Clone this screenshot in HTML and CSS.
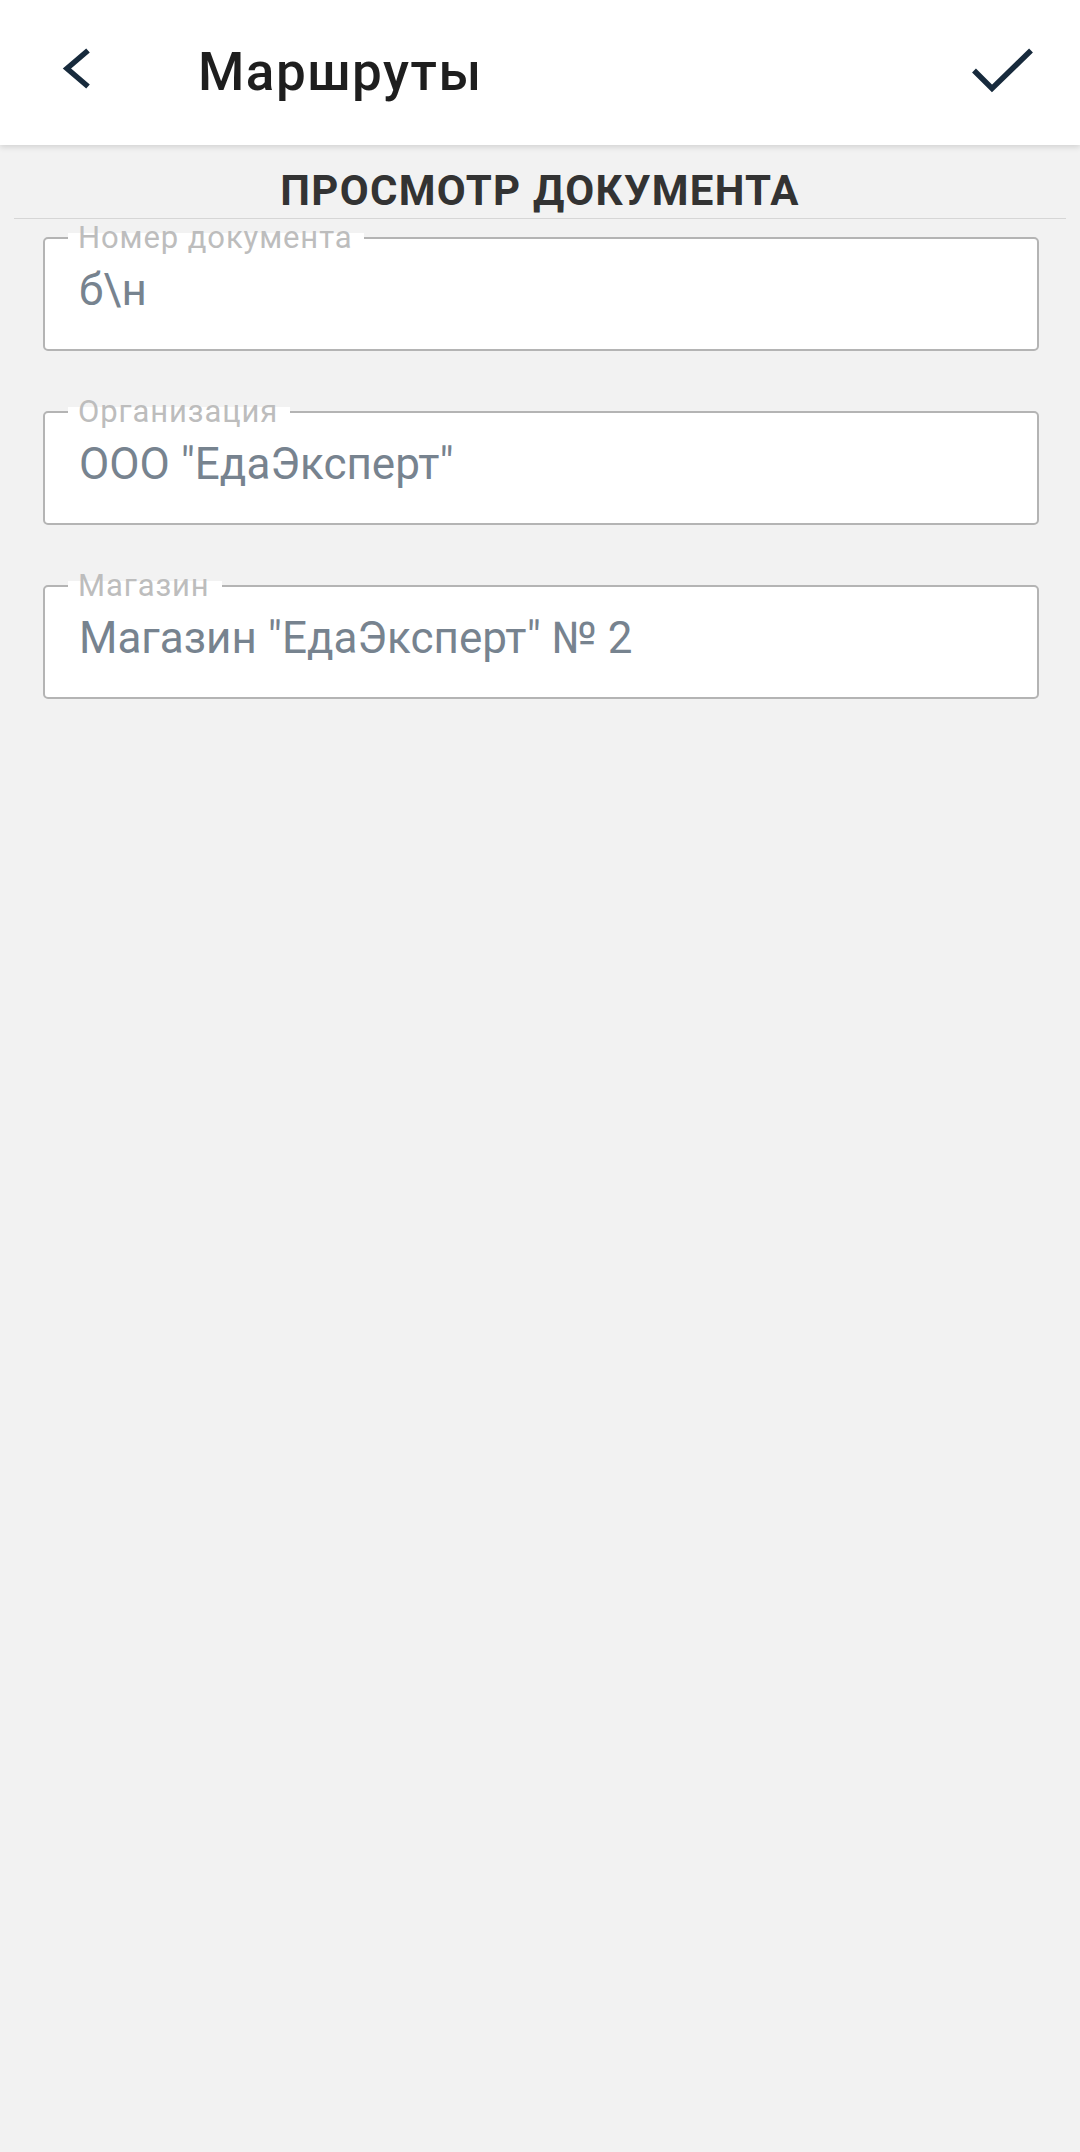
FILE: index.html
```html
<!DOCTYPE html>
<html lang="ru">
<head>
<meta charset="utf-8">
<title>Маршруты</title>
<link rel="stylesheet" href="styles.css">
</head>
<body>
<header class="appbar">
  <svg class="back" viewBox="0 0 60 60" width="60" height="60">
    <polyline points="41,7.5 20,25.5 41,43.5" fill="none" stroke="#172a3c" stroke-width="5.5" stroke-linejoin="miter"/>
  </svg>
  <h1 class="title">Маршруты</h1>
  <svg class="check" viewBox="0 0 70 60" width="70" height="60">
    <polyline points="4,27.5 22,45.5 61,7.5" fill="none" stroke="#172a3c" stroke-width="5.5" stroke-linejoin="miter"/>
  </svg>
</header>
<main class="content">
  <h2 class="section-title">ПРОСМОТР ДОКУМЕНТА</h2>
  <div class="divider"></div>
  <div class="fields">
    <div class="field">
      <span class="field-label">Номер документа</span>
      <div class="field-value">б\н</div>
    </div>
    <div class="field">
      <span class="field-label">Организация</span>
      <div class="field-value">ООО "ЕдаЭксперт"</div>
    </div>
    <div class="field">
      <span class="field-label">Магазин</span>
      <div class="field-value">Магазин "ЕдаЭксперт" № 2</div>
    </div>
  </div>
</main>
</body>
</html>
```
FILE: styles.css
```css
html, body {
  margin: 0;
  padding: 0;
}
body {
  background: #f2f2f2;
  font-family: Roboto, "Noto Sans", "Liberation Sans", sans-serif;
  min-height: 2152px;
}
.appbar {
  height: 145px;
  background: #ffffff;
  display: flex;
  align-items: center;
  box-shadow: 0 2px 6px rgba(0, 0, 0, 0.14);
  position: relative;
  z-index: 1;
}
.back {
  margin-left: 47px;
  flex: none;
}
.title {
  margin: 0 0 0 91px;
  font-size: 53px;
  font-weight: 500;
  letter-spacing: 1.5px;
  line-height: 61px;
  color: #1e1e1e;
  flex: 1;
}
.check {
  margin-right: 40px;
  flex: none;
}
.content {
  padding-top: 21px;
}
.section-title {
  margin: 0;
  text-align: center;
  font-size: 42px;
  font-weight: 700;
  letter-spacing: 1.3px;
  line-height: 49px;
  color: #333333;
}
.divider {
  height: 1px;
  background: #d6d6d6;
  margin: 3px 14px 0 14px;
}
.fields {
  display: flex;
  flex-direction: column;
  gap: 60px;
  padding: 18px 41px 0 43px;
}
.field {
  position: relative;
  height: 114px;
  box-sizing: border-box;
  border: 2px solid #b4b4b4;
  border-radius: 5px;
  background: #ffffff;
  padding: 25px 20px 0 34px;
}
.field-label {
  position: absolute;
  top: -19px;
  left: 23px;
  padding: 0 12px 0 10px;
  font-size: 31px;
  letter-spacing: 0.9px;
  line-height: 35px;
  color: #bdbdbd;
  background: linear-gradient(to bottom, transparent 13px, #ffffff 13px);
}
.field-value {
  font-size: 44px;
  line-height: 52px;
  color: #77838f;
  white-space: nowrap;
}
```
